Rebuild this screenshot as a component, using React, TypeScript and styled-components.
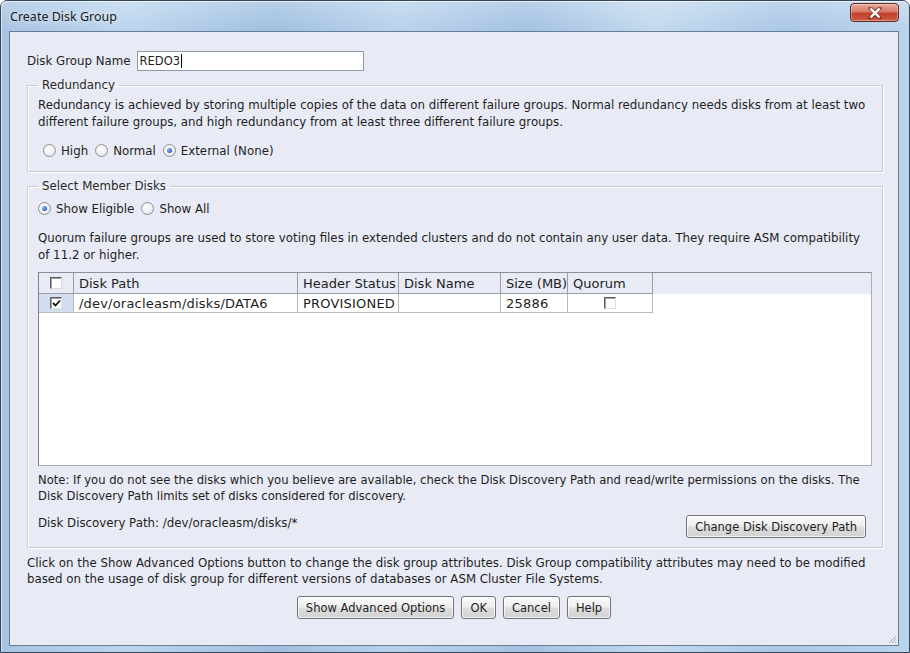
import styled, { createGlobalStyle } from "styled-components";

const GlobalStyle = createGlobalStyle`
	html, body {
		margin: 0;
		padding: 0;
		background: #ffffff;
	}
	body {
		width: 910px;
		height: 653px;
		overflow: hidden;
		font-family: "DejaVu Sans", "Liberation Sans", sans-serif;
	}
`;

const FONT = `"DejaVu Sans", "Liberation Sans", sans-serif`;

const Window = styled.div`
	box-sizing: border-box;
	width: 910px;
	height: 653px;
	display: flex;
	flex-direction: column;
	border: 1px solid #34465a;
	border-radius: 7px 7px 0 0;
	padding: 0 10px 6px 8px;
	background: linear-gradient(
		90deg,
		#a6c3e2 0%,
		#bcd5ee 14%,
		#9fbfe0 30%,
		#b9d2ec 44%,
		#a3c1e2 58%,
		#c2d9ef 72%,
		#aac7e6 86%,
		#bad4ed 100%
	);
	box-shadow: inset 1px 1px 0 rgba(255, 255, 255, 0.6);
`;

const TitleBar = styled.div`
	height: 30px;
	display: flex;
	align-items: flex-start;
	justify-content: space-between;
	background: linear-gradient(180deg, rgba(255, 255, 255, 0.25) 0%, rgba(255, 255, 255, 0) 100%);
	margin: 0 -10px 0 -8px;
	padding: 0 10px 0 8px;
`;

const Title = styled.span`
	margin: 7px 0 0 1px;
	font-family: "Noto Sans", "Open Sans", sans-serif;
	font-size: 12.5px;
	color: #1b1b1b;
	text-shadow: 0 0 6px rgba(255, 255, 255, 0.9);
`;

const CloseButton = styled.div`
	width: 49px;
	height: 19px;
	margin-top: 2px;
	box-sizing: border-box;
	border: 1px solid #5d2a22;
	border-radius: 4px;
	display: flex;
	align-items: center;
	justify-content: center;
	background: linear-gradient(180deg, #e8aa9c 0%, #d77a68 45%, #c2402c 55%, #cf5a40 100%);
	box-shadow: inset 0 0 0 1px rgba(255, 255, 255, 0.35);
`;

const Body = styled.div`
	position: relative;
	flex: 1;
	display: flex;
	flex-direction: column;
	border: 1px solid #6b7c90;
	background: #e8ebf5;
	padding: 19px 15px 0 17px;
	color: #1e1e1e;
	font-family: ${FONT};
	font-size: 11.8px;
`;

const NameRow = styled.div`
	display: flex;
	align-items: center;
	gap: 6px;
	height: 20px;
`;

const TextField = styled.div`
	box-sizing: border-box;
	width: 227px;
	height: 20px;
	display: flex;
	align-items: center;
	padding-left: 2px;
	background: #ffffff;
	border: 1px solid #8e9aa6;
	font-size: 11.5px;
`;

const Caret = styled.span`
	width: 1px;
	height: 14px;
	background: #000;
	margin-left: 1px;
`;

const Group = styled.fieldset<{ $top: number; $bottom: number }>`
	margin: ${({ $top }) => $top}px 0 0 0;
	padding: 0 10px ${({ $bottom }) => $bottom}px 10px;
	border: 1px solid #c9ccd6;
	box-shadow: inset 1px 1px 0 #ffffff, 1px 1px 0 #ffffff;
	min-width: 0;
	display: flex;
	flex-direction: column;
`;

const Legend = styled.legend`
	padding: 0 4px;
	line-height: 16px;
	font-size: 11.8px;
	color: #2a2a2a;
`;

const Paragraph = styled.p<{ $top: number; $lh?: number; $size?: number }>`
	margin: ${({ $top }) => $top}px 0 0 0;
	line-height: ${({ $lh }) => $lh ?? 17}px;
	font-size: ${({ $size }) => $size ?? 11.8}px;
`;

const RadioRow = styled.div<{ $top: number; $indent?: number }>`
	display: flex;
	align-items: center;
	gap: 7px;
	height: 17px;
	margin-top: ${({ $top }) => $top}px;
	padding-left: ${({ $indent }) => $indent ?? 0}px;
`;

const RadioItem = styled.label`
	display: flex;
	align-items: center;
	gap: 5px;
`;

const RadioCircle = styled.span<{ $checked?: boolean }>`
	box-sizing: border-box;
	width: 13px;
	height: 13px;
	border-radius: 50%;
	border: 1px solid #8b8f96;
	background: radial-gradient(circle at 40% 35%, #ffffff 0%, #f1f1f1 50%, #d9dbdf 100%);
	display: flex;
	align-items: center;
	justify-content: center;

	&::after {
		content: "";
		display: ${({ $checked }) => ($checked ? "block" : "none")};
		width: 5px;
		height: 5px;
		border-radius: 50%;
		background: radial-gradient(circle at 35% 35%, #8fb7f0 0%, #2a62c8 70%, #1d4aa0 100%);
	}
`;

const TableBox = styled.div`
	margin-top: 8px;
	height: 194px;
	box-sizing: border-box;
	background: #ffffff;
	border: 1px solid #a9adb5;
	border-top-color: #8d9198;
	border-left-color: #7c8088;
`;

const COLUMNS = "35px 224px 101px 102px 67px 85px";

const HeaderRow = styled.div`
	display: grid;
	grid-template-columns: ${COLUMNS} 1fr;
	height: 21px;
	background: #e8ebf5;
`;

const HeaderCell = styled.div<{ $center?: boolean; $filler?: boolean }>`
	box-sizing: border-box;
	display: flex;
	align-items: center;
	justify-content: ${({ $center }) => ($center ? "center" : "flex-start")};
	padding-left: ${({ $center }) => ($center ? 0 : 5)}px;
	border-right: ${({ $filler }) => ($filler ? "none" : "1px solid #9a9ea6")};
	border-bottom: ${({ $filler }) => ($filler ? "none" : "1px solid #9a9ea6")};
	font-size: 13px;
	color: #1e1e1e;
	white-space: nowrap;
	overflow: hidden;
`;

const DataRow = styled.div`
	display: grid;
	grid-template-columns: ${COLUMNS};
	height: 19px;
`;

const DataCell = styled.div<{ $center?: boolean; $selected?: boolean }>`
	box-sizing: border-box;
	display: flex;
	align-items: center;
	justify-content: ${({ $center }) => ($center ? "center" : "flex-start")};
	padding-left: ${({ $center }) => ($center ? 0 : 5)}px;
	border-right: 1px solid #b7bac0;
	border-bottom: 1px solid #b7bac0;
	background: ${({ $selected }) => ($selected ? "#d3def0" : "#ffffff")};
	font-size: 13px;
	letter-spacing: 0.2px;
	white-space: nowrap;
	overflow: hidden;
`;

const CheckBox = styled.span`
	box-sizing: border-box;
	width: 12px;
	height: 12px;
	background: #ffffff;
	border-top: 1px solid #5f5f5f;
	border-left: 1px solid #5f5f5f;
	border-bottom: 1px solid #dcdcdc;
	border-right: 1px solid #dcdcdc;
	box-shadow: inset 1px 1px 0 #a0a0a0;
	display: flex;
	align-items: center;
	justify-content: center;
`;

const DiscoveryRow = styled.div`
	display: flex;
	align-items: flex-start;
	justify-content: space-between;
	margin-top: 11px;
	padding-right: 6px;
	line-height: 16px;
`;

const Button = styled.button`
	box-sizing: border-box;
	height: 23px;
	padding: 0 8px;
	border: 1px solid #707479;
	border-radius: 3px;
	background: linear-gradient(180deg, #fbfbfb 0%, #eeeeee 45%, #dddddd 55%, #d2d2d2 100%);
	box-shadow: inset 0 0 0 1px rgba(255, 255, 255, 0.7);
	font-family: ${FONT};
	font-size: 11.5px;
	color: #1e1e1e;
	cursor: pointer;
	white-space: nowrap;
`;

const ButtonBar = styled.div`
	display: flex;
	justify-content: center;
	gap: 7px;
	margin-top: 9px;
	padding-right: 2px;
`;

const Grip = styled.svg`
	position: absolute;
	right: 1px;
	bottom: 1px;
`;

const Radio = ({ label, checked }: { label: string; checked?: boolean }) => (
	<RadioItem>
		<RadioCircle $checked={checked} />
		{label}
	</RadioItem>
);

const Check = ({ checked }: { checked?: boolean }) => (
	<CheckBox>
		{checked && (
			<svg width="9" height="9" viewBox="0 0 9 9">
				<path d="M1 4 L3.5 6.5 L8 1.5" stroke="#111" strokeWidth="1.8" fill="none" />
			</svg>
		)}
	</CheckBox>
);

const App = () => {
	return (
		<>
			<GlobalStyle />
			<Window>
				<TitleBar>
					<Title>Create Disk Group</Title>
					<CloseButton>
						<svg width="14" height="12" viewBox="0 0 14 12">
							<path
								d="M2 1 L7 5 L12 1 M2 11 L7 7 L12 11"
								stroke="#4a1d16"
								strokeWidth="4"
								strokeLinecap="round"
								fill="none"
								opacity="0.55"
							/>
							<path d="M2.5 1.5 L11.5 10.5 M11.5 1.5 L2.5 10.5" stroke="#ffffff" strokeWidth="2.4" />
						</svg>
					</CloseButton>
				</TitleBar>
				<Body>
					<NameRow>
						<span>Disk Group Name</span>
						<TextField>
							REDO3
							<Caret />
						</TextField>
					</NameRow>

					<Group $top={6} $bottom={12}>
						<Legend>Redundancy</Legend>
						<Paragraph $top={4}>
							Redundancy is achieved by storing multiple copies of the data on different failure groups. Normal
							redundancy needs disks from at least two different failure groups, and high redundancy from at least
							three different failure groups.
						</Paragraph>
						<RadioRow $top={11} $indent={5}>
							<Radio label="High" />
							<Radio label="Normal" />
							<Radio label="External (None)" checked />
						</RadioRow>
					</Group>

					<Group $top={6} $bottom={9}>
						<Legend>Select Member Disks</Legend>
						<RadioRow $top={6}>
							<Radio label="Show Eligible" checked />
							<Radio label="Show All" />
						</RadioRow>
						<Paragraph $top={13}>
							Quorum failure groups are used to store voting files in extended clusters and do not contain any user
							data. They require ASM compatibility of 11.2 or higher.
						</Paragraph>
						<TableBox>
							<HeaderRow>
								<HeaderCell $center>
									<Check />
								</HeaderCell>
								<HeaderCell>Disk Path</HeaderCell>
								<HeaderCell>Header Status</HeaderCell>
								<HeaderCell>Disk Name</HeaderCell>
								<HeaderCell>Size (MB)</HeaderCell>
								<HeaderCell>Quorum</HeaderCell>
								<HeaderCell $filler />
							</HeaderRow>
							<DataRow>
								<DataCell $center $selected>
									<Check checked />
								</DataCell>
								<DataCell>/dev/oracleasm/disks/DATA6</DataCell>
								<DataCell>PROVISIONED</DataCell>
								<DataCell />
								<DataCell>25886</DataCell>
								<DataCell $center>
									<Check />
								</DataCell>
							</DataRow>
						</TableBox>
						<Paragraph $top={6} $lh={16} $size={11.6}>
							Note: If you do not see the disks which you believe are available, check the Disk Discovery Path and
							read/write permissions on the disks. The Disk Discovery Path limits set of disks considered for
							discovery.
						</Paragraph>
						<DiscoveryRow>
							<span>Disk Discovery Path: /dev/oracleasm/disks/*</span>
							<Button>Change Disk Discovery Path</Button>
						</DiscoveryRow>
					</Group>

					<Paragraph $top={7} $lh={16}>
						Click on the Show Advanced Options button to change the disk group attributes. Disk Group compatibility
						attributes may need to be modified based on the usage of disk group for different versions of databases or
						ASM Cluster File Systems.
					</Paragraph>
					<ButtonBar>
						<Button>Show Advanced Options</Button>
						<Button>OK</Button>
						<Button>Cancel</Button>
						<Button>Help</Button>
					</ButtonBar>

					<Grip width="10" height="10" viewBox="0 0 10 10">
						<path d="M9 2 L2 9 M9 5 L5 9 M9 8 L8 9" stroke="#a6acb4" strokeWidth="1" />
					</Grip>
				</Body>
			</Window>
		</>
	);
};

export default App;
